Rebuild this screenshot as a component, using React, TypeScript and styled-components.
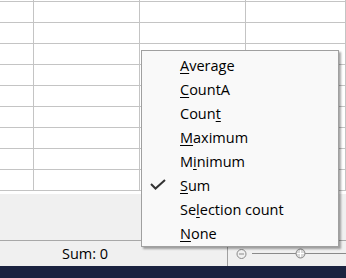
import React from "react";
import styled, { createGlobalStyle } from "styled-components";

const Global = createGlobalStyle`
  html, body { margin: 0; padding: 0; }
  body {
    width: 346px; height: 278px; overflow: hidden;
    font-family: "Open Sans", "Noto Sans", sans-serif;
    background: #f0f0f0;
  }
`;

const Page = styled.div`
  position: relative;
  width: 346px;
  height: 278px;
  display: flex;
  flex-direction: column;
`;

const Sheet = styled.div`
  height: 194px;
  overflow: hidden;
  background: #fff;
`;

const Grid = styled.div`
  margin-top: -19px;
  display: grid;
  grid-template-columns: 34px 106px 106px 1fr;
  grid-auto-rows: 21px;
`;

const Cell = styled.div`
  border-right: 1px solid #c4c4c4;
  border-bottom: 1px solid #c4c4c4;
`;

const Gap = styled.div`
  height: 46px;
  background: #f0f0f0;
  border-bottom: 1px solid #a8a8a8;
`;

const StatusBar = styled.div`
  height: 25px;
  background: #f0f0f0;
  display: flex;
  align-items: center;
  font-size: 14.5px;
  color: #000;
`;

const SumText = styled.div`
  padding-left: 62px;
  width: 228px;
  box-sizing: border-box;
  line-height: 20px;
`;

const Separator = styled.div`
  width: 1px;
  height: 19px;
  background: #a0a0a0;
  margin-top: 6px;
`;

const Zoom = styled.div`
  flex: 1;
  display: flex;
  align-items: center;
  padding-left: 8px;
`;

const Taskbar = styled.div`
  height: 12px;
  background: #1b2340;
`;

const Menu = styled.div`
  position: absolute;
  left: 141px;
  top: 50px;
  width: 198px;
  height: 197px;
  box-sizing: border-box;
  background: #f9f9f9;
  border: 1px solid #a0a0a0;
  box-shadow: 2px 2px 2px rgba(0, 0, 0, 0.35);
  padding-top: 2px;
  display: flex;
  flex-direction: column;
`;

const Item = styled.div`
  height: 24px;
  display: flex;
  align-items: center;
  position: relative;
  padding-left: 38px;
  font-size: 14.5px;
  color: #000;
  white-space: nowrap;
`;

const Acc = styled.span`
  text-decoration: underline;
  text-decoration-thickness: 1px;
  text-underline-offset: 2px;
`;

const Check = styled.svg`
  position: absolute;
  left: 8px;
  top: 6px;
`;

const items: [string, string, string][] = [
  ["", "A", "verage"],
  ["", "C", "ountA"],
  ["Coun", "t", ""],
  ["", "M", "aximum"],
  ["M", "i", "nimum"],
  ["", "S", "um"],
  ["Se", "l", "ection count"],
  ["", "N", "one"],
];

export default function App() {
  const cells = [];
  for (let i = 0; i < 40; i++) cells.push(<Cell key={i} />);
  return (
    <Page>
      <Global />
      <Sheet>
        <Grid>{cells}</Grid>
      </Sheet>
      <Gap />
      <StatusBar>
        <SumText>Sum: 0</SumText>
        <Separator />
        <Zoom>
          <svg width="110" height="14" viewBox="0 0 110 14">
            <circle cx="5.5" cy="7" r="4.5" fill="none" stroke="#8a8a8a" strokeWidth="1" />
            <line x1="3" y1="7" x2="8" y2="7" stroke="#8a8a8a" strokeWidth="1" />
            <line x1="16" y1="6.5" x2="110" y2="6.5" stroke="#8a8a8a" strokeWidth="1" />
            <circle cx="64.5" cy="6.5" r="4.5" fill="#d8d8d8" stroke="#8a8a8a" strokeWidth="1" />
            <line x1="64.5" y1="3" x2="64.5" y2="10" stroke="#ffffff" strokeWidth="1" />
            <line x1="61" y1="6.5" x2="68" y2="6.5" stroke="#ffffff" strokeWidth="1" />
          </svg>
        </Zoom>
      </StatusBar>
      <Taskbar />
      <Menu>
        {items.map(([a, b, c], i) => (
          <Item key={i}>
            {i === 5 && (
              <Check width="16" height="11" viewBox="0 0 16 11">
                <path d="M1 5 L5.5 9.5 L15 1" fill="none" stroke="#333" strokeWidth="2" />
              </Check>
            )}
            {a}
            <Acc>{b}</Acc>
            {c}
          </Item>
        ))}
      </Menu>
    </Page>
  );
}
